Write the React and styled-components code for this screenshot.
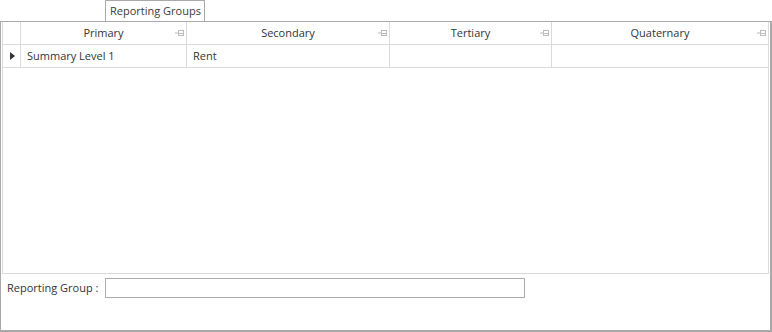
import styled, { createGlobalStyle } from "styled-components";

const GlobalStyle = createGlobalStyle`
  html, body {
    margin: 0;
    padding: 0;
    background: #fff;
  }
  body {
    font-family: "Open Sans", "Noto Sans", sans-serif;
    font-size: 11px;
    color: #333;
  }
`;

// layout
const Page = styled.div`
  width: 772px;
  height: 332px;
  display: flex;
  flex-direction: column;
  box-sizing: border-box;
`;
const TabStrip = styled.div`
  display: flex;
  align-items: flex-end;
  height: 21px;
  padding-left: 105px;
`;
const Tab = styled.div`
  height: 21px;
  box-sizing: border-box;
  padding: 0 3px 1px 4px;
  border: 1px solid #a9a9a9;
  border-bottom: none;
  background: #fff;
  line-height: 19px;
  color: #3b3b3b;
  white-space: nowrap;
`;
const Panel = styled.div`
  flex: 1;
  display: flex;
  flex-direction: column;
  border: 1px solid #a9a9a9;
  border-right-width: 2px;
  border-bottom-width: 2px;
  padding: 0 1px 0 1px;
`;
const Grid = styled.div`
  height: 251px;
  border: 1px solid #dadada;
  border-top: none;
  display: flex;
  flex-direction: column;
`;
const Row = styled.div`
  display: grid;
  grid-template-columns: 18px 166px 203px 162px 1fr;
  height: 22px;
  border-bottom: 1px solid #dadada;
`;
const HeadCell = styled.div`
  position: relative;
  display: flex;
  align-items: center;
  justify-content: center;
  padding-bottom: 2px;
  border-right: 1px solid #dadada;
  color: #333;
  &:last-child {
    border-right: none;
  }
`;
const Cell = styled.div`
  display: flex;
  align-items: center;
  padding: 0 0 2px 6px;
  border-right: 1px solid #dadada;
  color: #333;
  &:last-child {
    border-right: none;
  }
`;
const Indicator = styled.div`
  display: flex;
  align-items: center;
  justify-content: center;
  border-right: 1px solid #dadada;
`;
const Arrow = styled.div`
  width: 0;
  height: 0;
  border-top: 4.5px solid transparent;
  border-bottom: 4.5px solid transparent;
  border-left: 5px solid #333;
  margin-left: 1px;
`;
const Pin = styled.svg`
  position: absolute;
  right: 2px;
  top: 8px;
`;
const Form = styled.div`
  flex: 1;
  display: flex;
  align-items: flex-start;
  padding: 4px 0 0 5px;
  gap: 2px;
`;
const Label = styled.label`
  width: 96px;
  line-height: 20px;
  color: #333;
`;
const Input = styled.input`
  width: 420px;
  height: 20px;
  box-sizing: border-box;
  border: 1px solid #ababab;
  outline: none;
  margin: 0;
  padding: 0 3px;
  font: inherit;
`;

const PinIcon = () => (
  <Pin width="9" height="6" viewBox="0 0 9 6">
    <rect x="0" y="2.5" width="3" height="1" fill="#bcbcbc" />
    <rect x="3.5" y="0.5" width="5" height="5" fill="none" stroke="#bcbcbc" strokeWidth="1" />
    <rect x="4" y="3" width="4" height="1" fill="#bcbcbc" />
  </Pin>
);

const columns = ["Primary", "Secondary", "Tertiary", "Quaternary"];

const App = () => (
  <Page>
    <GlobalStyle />
    <TabStrip>
      <Tab>Reporting Groups</Tab>
    </TabStrip>
    <Panel>
      <Grid>
        <Row>
          <Indicator />
          {columns.map((c) => (
            <HeadCell key={c}>
              {c}
              <PinIcon />
            </HeadCell>
          ))}
        </Row>
        <Row>
          <Indicator>
            <Arrow />
          </Indicator>
          <Cell>Summary Level 1</Cell>
          <Cell>Rent</Cell>
          <Cell />
          <Cell />
        </Row>
      </Grid>
      <Form>
        <Label>Reporting Group :</Label>
        <Input />
      </Form>
    </Panel>
  </Page>
);

export default App;
